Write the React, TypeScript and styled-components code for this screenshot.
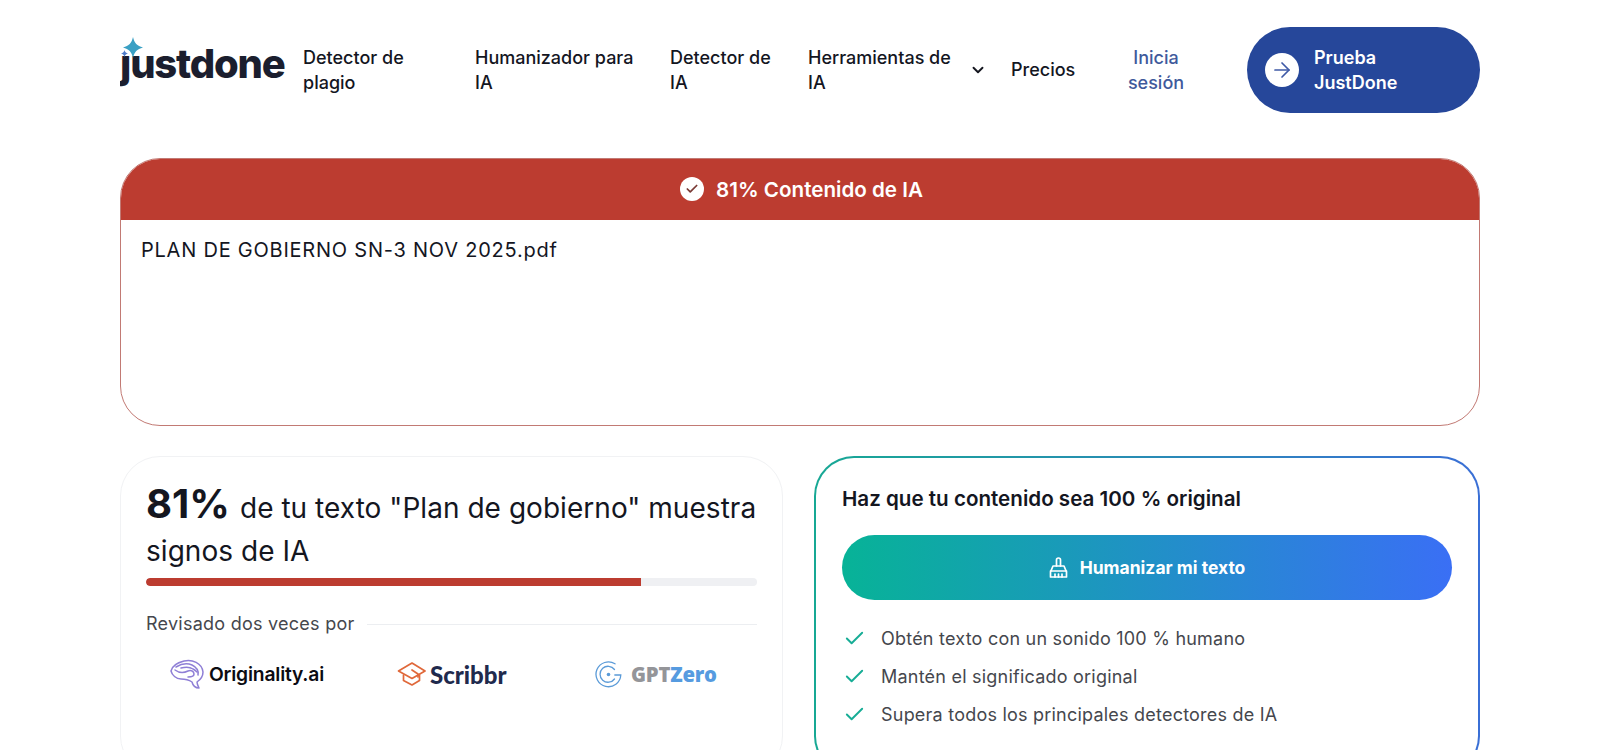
import styled, { createGlobalStyle } from "styled-components";
import { ChevronDown, ArrowRight, Check } from "lucide-react";

const GlobalStyle = createGlobalStyle`
  html, body {
    margin: 0;
    padding: 0;
    background: #fff;
    overflow: hidden;
    font-family: Inter, "Liberation Sans", sans-serif;
    color: #14161f;
  }
  * { box-sizing: border-box; }
`;

const Page = styled.div`
  width: 1360px;
  height: 750px;
  margin: 0 auto;
  overflow: hidden;
`;

const Header = styled.header`
  display: flex;
  align-items: center;
  height: 140px;
  padding-bottom: 1px;
`;

const Logo = styled.a`
  position: relative;
  display: block;
  width: 183px;
  flex: none;
  padding-bottom: 11px;
  font-family: Inter, sans-serif;
  font-weight: 800;
  font-size: 40px;
  line-height: 50px;
  letter-spacing: -1.2px;
  color: #1b1e2e;
`;

const Sparkle = styled.svg`
  position: absolute;
  left: 0;
  top: -2px;
`;

const NavItem = styled.a<{ $width: number }>`
  display: flex;
  align-items: center;
  flex: none;
  width: ${(p) => p.$width}px;
  padding-top: 1px;
  padding-right: 30px;
  font-size: 18px;
  line-height: 25.5px;
  font-weight: 500;
  color: #14161f;
`;

const NavMenu = styled(NavItem)`
  padding-right: 0;
`;

const NavChevron = styled(ChevronDown)`
  flex: none;
  margin-left: 8px;
  margin-right: 24px;
`;

const SignIn = styled.a`
  width: 80px;
  flex: none;
  margin-left: 40px;
  margin-right: 51px;
  padding-top: 1px;
  text-align: center;
  font-size: 18px;
  line-height: 25.5px;
  font-weight: 500;
  color: #3f5a9c;
`;

const TryButton = styled.a`
  display: flex;
  align-items: center;
  gap: 15px;
  width: 233px;
  height: 86px;
  flex: none;
  padding-left: 18px;
  border-radius: 43px;
  background: #26479a;
  color: #fff;
  font-size: 18px;
  line-height: 25.5px;
  font-weight: 600;
`;

const TryLabel = styled.span`
  padding-top: 1px;
`;

const ArrowCircle = styled.span`
  display: flex;
  align-items: center;
  justify-content: center;
  width: 34px;
  height: 34px;
  border-radius: 50%;
  background: #fff;
  color: #3f5aa6;
`;

const ResultCard = styled.section`
  height: 268px;
  margin-top: 18px;
  border: 1px solid #c27a74;
  border-radius: 40px;
  overflow: hidden;
`;

const ResultBanner = styled.div`
  display: flex;
  align-items: center;
  justify-content: center;
  gap: 12px;
  height: 62px;
  margin: -1px -1px 0;
  padding-left: 3px;
  background: #bc3c30;
  color: #fff;
  font-size: 20.6px;
  font-weight: 600;
`;

const BannerCheck = styled.span`
  display: flex;
  align-items: center;
  justify-content: center;
  width: 24px;
  height: 24px;
  border-radius: 50%;
  background: #fff;
  color: #7a3a35;
`;

const FileName = styled.p`
  margin: 0;
  padding: 17px 20px;
  font-size: 20px;
  line-height: 26px;
  letter-spacing: 0.77px;
  color: #14161f;
`;

const Columns = styled.div`
  display: grid;
  grid-template-columns: 663px 666px;
  gap: 31px;
  margin-top: 30px;
`;

const ScoreCard = styled.section`
  height: 320px;
  padding: 26px 25px 0;
  border: 1px solid #f1f2f4;
  border-radius: 40px;
`;

const ScoreTitle = styled.h2`
  margin: 0;
  font-size: 28px;
  line-height: 42.5px;
  font-weight: 400;
  letter-spacing: 0.04px;
  color: #14161f;
`;

const ScoreValue = styled.b`
  margin-right: 2px;
  font-size: 40px;
  font-weight: 700;
`;

const Track = styled.div`
  height: 8px;
  margin-top: 6px;
  border-radius: 4px;
  background: #eff0f3;
  overflow: hidden;
`;

const Fill = styled.div`
  height: 100%;
  border-radius: 4px 0 0 4px;
  background: #bc3c30;
`;

const CheckedRow = styled.div`
  display: flex;
  align-items: center;
  gap: 12px;
  margin-top: 26px;
  font-size: 18px;
  line-height: 24px;
  letter-spacing: 0.25px;
  color: #45474d;
`;

const Rule = styled.span`
  flex: 1;
  height: 1px;
  background: #eceef1;
`;

const Partners = styled.div`
  display: grid;
  grid-template-columns: 227px 198px 1fr;
  align-items: center;
  margin-top: 23px;
  padding-left: 24px;
`;

const Partner = styled.div`
  display: flex;
  align-items: center;
`;

const OriginalityName = styled.span`
  margin-left: 5px;
  font-size: 19.3px;
  font-weight: 600;
  letter-spacing: -0.2px;
  color: #0b0b12;
`;

const ScribbrName = styled.span`
  margin-left: 4px;
  font-family: Lato, sans-serif;
  font-size: 24px;
  font-weight: 900;
  color: #1f2a4d;
`;

const GptName = styled.span`
  margin-left: 9px;
  font-family: "Open Sans", sans-serif;
  font-size: 20.3px;
  font-weight: 800;
  letter-spacing: -0.2px;
  color: #949599;
`;

const GptAccent = styled.span`
  color: #569be0;
`;

const OfferCard = styled.section`
  height: 320px;
  padding: 26px 26px;
  border: 2px solid transparent;
  border-radius: 40px;
  background:
    linear-gradient(#fff, #fff) padding-box,
    linear-gradient(90deg, #17a894, #3a6fd6) border-box;
`;

const OfferTitle = styled.h3`
  margin: 0;
  font-size: 20.6px;
  line-height: 30px;
  font-weight: 600;
  color: #14161f;
`;

const HumanizeButton = styled.button`
  display: flex;
  align-items: center;
  justify-content: center;
  gap: 12px;
  width: 100%;
  height: 65px;
  margin-top: 21px;
  border: 0;
  border-radius: 33px;
  background: linear-gradient(90deg, #07b397, #3a6ff5);
  color: #fff;
  font-family: Inter, sans-serif;
  font-size: 17.5px;
  font-weight: 700;
`;

const Perks = styled.ul`
  display: grid;
  gap: 14px;
  margin: 26px 0 0;
  padding: 0 0 0 1px;
  list-style: none;
`;

const Perk = styled.li`
  display: flex;
  align-items: center;
  gap: 15px;
  height: 24px;
  font-size: 18px;
  letter-spacing: 0.22px;
  color: #45474d;
`;

const PerkCheck = styled(Check)`
  flex: none;
  color: #17ad96;
`;

const perks = [
  "Obtén texto con un sonido 100 % humano",
  "Mantén el significado original",
  "Supera todos los principales detectores de IA",
];

function BrainMark() {
  return (
    <svg width="34" height="30" viewBox="0 0 34 30" fill="none" stroke="#8f7fd6" strokeWidth="1.5" strokeLinecap="round" strokeLinejoin="round">
      <path d="M1 12C2 7 8 3.500 14 2c8-2 18 2 19 11 0 5-3 8-6 10 0 2 1 4 2 6-3 0-6-2-7-6-3-2-7-3-11-3-5 0-9-4-10-8z" />
      <path d="M5 11c4 3 9 3 13 1 3-1 6 0 6 3s-3 3-6 3" />
      <path d="M6 8c5-3 11-4 16-2 4 2 7 5 6 10" />
      <path d="M11 9c4-1 9-1 12 1 2 1 3 2 4 3" />
    </svg>
  );
}

function CapMark() {
  return (
    <svg width="29" height="26" viewBox="0 0 29 26" fill="none" stroke="#e0683a" strokeWidth="1.7" strokeLinejoin="round" strokeLinecap="round">
      <path d="M1.500 10 15 2l13 8-13 7.500z" />
      <path d="M6.500 14v5.500L15 24l7.500-4.500V14" />
      <path d="M15 9l6 4v3" />
    </svg>
  );
}

function GptMark() {
  return (
    <svg width="27" height="27" viewBox="0 0 27 27" fill="none" stroke="#5b9bd8" strokeWidth="1.3" strokeLinecap="round">
      <path d="M20 2.800A12.400 12.400 0 1 0 25.800 14h-6" />
      <path d="M19.500 8.500a8 8 0 1 0 0 9.500" />
      <circle cx="13.500" cy="13.500" r="1.800" fill="#5b9bd8" stroke="none" />
    </svg>
  );
}

function BroomIcon() {
  return (
    <svg width="19" height="22" viewBox="0 0 19 22" fill="none" stroke="#fff" strokeWidth="1.7" strokeLinejoin="round" strokeLinecap="round">
      <path d="M7.500 9V3a2 2 0 0 1 4 0v6" />
      <path d="M4 9h11l2.500 6v5h-16v-5z" />
      <path d="M1.500 14h16" />
      <path d="M6 20v-3M9.500 20v-3M13 20v-3" />
    </svg>
  );
}

export default function App() {
  return (
    <Page>
      <GlobalStyle />
      <Header>
        <Logo>
          justdone
          <Sparkle width="28" height="30" viewBox="0 0 28 30">
            {/* the stars sit where the dot of the j would be */}
            <rect x="0" y="6" width="16" height="12" fill="#fff" />
            <path d="M13 0c1.300 6 4 9 10 10.500-6 1.500-8.700 4.500-10 10.500-1.300-6-4-9-10-10.500C9 9 11.700 6 13 0z" fill="#3aa0c4" />
            <path d="M4.500 13c.4 2 1.400 3 3.500 3.500-2.100.5-3.100 1.500-3.500 3.500-.4-2-1.400-3-3.500-3.500 2.100-.5 3.100-1.500 3.500-3.500z" fill="#4f7cc9" />
          </Sparkle>
        </Logo>
        <NavItem $width={172}>Detector de plagio</NavItem>
        <NavItem $width={195}>Humanizador para IA</NavItem>
        <NavItem $width={138}>Detector de IA</NavItem>
        <NavMenu as="div" $width={203}>
          <span>Herramientas de IA</span>
          <NavChevron size={18} strokeWidth={2.5} />
        </NavMenu>
        <NavMenu $width={65}>Precios</NavMenu>
        <SignIn>Inicia sesión</SignIn>
        <TryButton>
          <ArrowCircle>
            <ArrowRight size={24} strokeWidth={1.7} />
          </ArrowCircle>
          <TryLabel>Prueba<br />JustDone</TryLabel>
        </TryButton>
      </Header>

      <ResultCard>
        <ResultBanner>
          <BannerCheck>
            <Check size={14} strokeWidth={3} />
          </BannerCheck>
          81% Contenido de IA
        </ResultBanner>
        <FileName>PLAN DE GOBIERNO SN-3 NOV 2025.pdf</FileName>
      </ResultCard>

      <Columns>
        <ScoreCard>
          <ScoreTitle>
            <ScoreValue>81%</ScoreValue> de tu texto "Plan de gobierno" muestra signos de IA
          </ScoreTitle>
          <Track>
            <Fill style={{ width: "81%" }} />
          </Track>
          <CheckedRow>
            Revisado dos veces por
            <Rule />
          </CheckedRow>
          <Partners>
            <Partner>
              <BrainMark />
              <OriginalityName>Originality.ai</OriginalityName>
            </Partner>
            <Partner>
              <CapMark />
              <ScribbrName>Scribbr</ScribbrName>
            </Partner>
            <Partner>
              <GptMark />
              <GptName>GPT<GptAccent>Zero</GptAccent></GptName>
            </Partner>
          </Partners>
        </ScoreCard>

        <OfferCard>
          <OfferTitle>Haz que tu contenido sea 100 % original</OfferTitle>
          <HumanizeButton>
            <BroomIcon />
            Humanizar mi texto
          </HumanizeButton>
          <Perks>
            {perks.map((text) => (
              <Perk key={text}>
                <PerkCheck size={23} strokeWidth={2} />
                {text}
              </Perk>
            ))}
          </Perks>
        </OfferCard>
      </Columns>
    </Page>
  );
}
